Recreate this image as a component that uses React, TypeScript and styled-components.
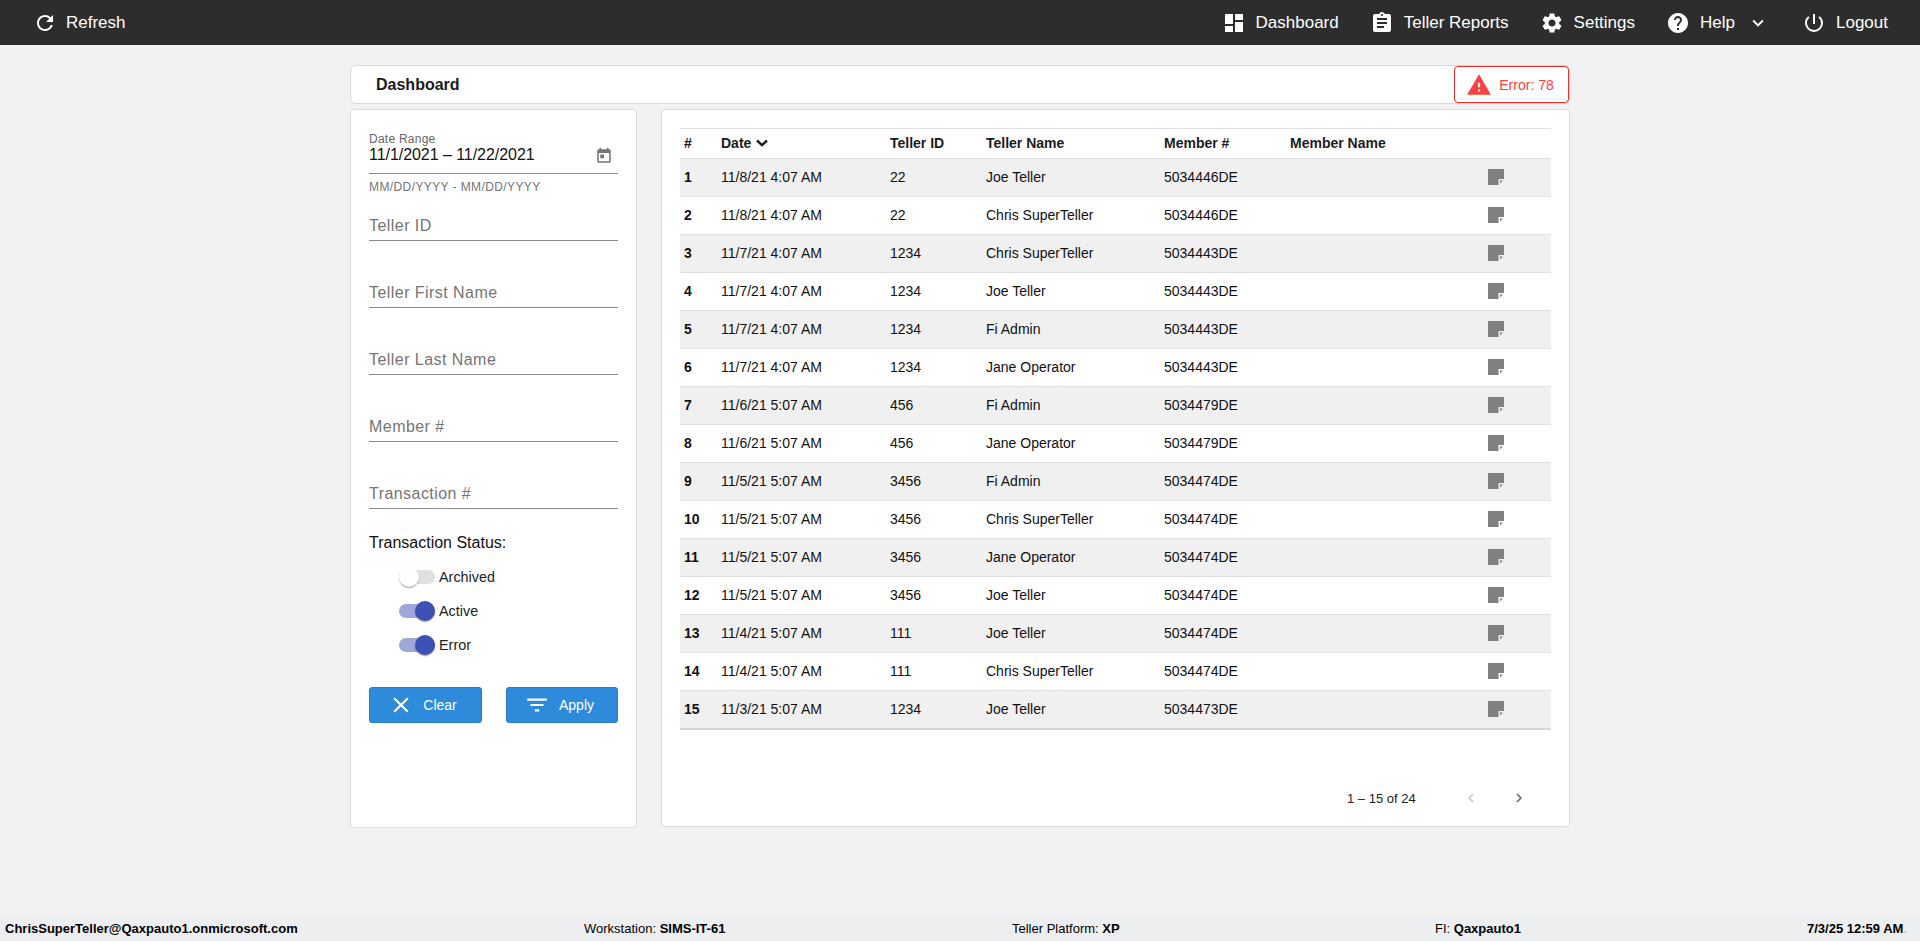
import React from 'react'
import styled, { createGlobalStyle } from 'styled-components'
import {
  MdRefresh,
  MdDashboard,
  MdAssignment,
  MdSettings,
  MdHelp,
  MdExpandMore,
  MdPowerSettingsNew,
  MdWarning,
  MdClose,
  MdFilterList,
  MdChevronLeft,
  MdChevronRight,
} from 'react-icons/md'

const rows = [
  ['11/8/21 4:07 AM', '22', 'Joe Teller', '5034446DE'],
  ['11/8/21 4:07 AM', '22', 'Chris SuperTeller', '5034446DE'],
  ['11/7/21 4:07 AM', '1234', 'Chris SuperTeller', '5034443DE'],
  ['11/7/21 4:07 AM', '1234', 'Joe Teller', '5034443DE'],
  ['11/7/21 4:07 AM', '1234', 'Fi Admin', '5034443DE'],
  ['11/7/21 4:07 AM', '1234', 'Jane Operator', '5034443DE'],
  ['11/6/21 5:07 AM', '456', 'Fi Admin', '5034479DE'],
  ['11/6/21 5:07 AM', '456', 'Jane Operator', '5034479DE'],
  ['11/5/21 5:07 AM', '3456', 'Fi Admin', '5034474DE'],
  ['11/5/21 5:07 AM', '3456', 'Chris SuperTeller', '5034474DE'],
  ['11/5/21 5:07 AM', '3456', 'Jane Operator', '5034474DE'],
  ['11/5/21 5:07 AM', '3456', 'Joe Teller', '5034474DE'],
  ['11/4/21 5:07 AM', '111', 'Joe Teller', '5034474DE'],
  ['11/4/21 5:07 AM', '111', 'Chris SuperTeller', '5034474DE'],
  ['11/3/21 5:07 AM', '1234', 'Joe Teller', '5034473DE'],
]

const filters = ['Teller ID', 'Teller First Name', 'Teller Last Name', 'Member #', 'Transaction #']

const statuses = [
  { label: 'Archived', on: false },
  { label: 'Active', on: true },
  { label: 'Error', on: true },
]

const NoteIcon = () => (
  <svg width="16" height="16" viewBox="0 0 16 16">
    <path d="M0 0h16v10h-5.5v6H0z" fill="#808080" />
    <path d="M12 11.5h3L12 14.5z" fill="#808080" />
  </svg>
)

const App: React.FC = () => {
  return (
    <Page>
      <GlobalStyle />
      <TopBar>
        <RefreshItem>
          <MdRefresh size={24} />
          Refresh
        </RefreshItem>
        <NavGroup>
          <NavItem>
            <MdDashboard size={24} />
            Dashboard
          </NavItem>
          <NavItem>
            <MdAssignment size={24} />
            Teller Reports
          </NavItem>
          <NavItem>
            <MdSettings size={24} />
            Settings
          </NavItem>
          <NavItem>
            <MdHelp size={24} />
            Help
            <Caret>
              <MdExpandMore size={22} />
            </Caret>
          </NavItem>
          <NavItem>
            <MdPowerSettingsNew size={24} />
            Logout
          </NavItem>
        </NavGroup>
      </TopBar>

      <Main>
        <TitleBar>
          <Title>Dashboard</Title>
          <ErrorBadge>
            <MdWarning size={26} />
            Error: 78
          </ErrorBadge>
        </TitleBar>

        <Panels>
          <FilterPanel>
            <DateField>
              <DateLabel>Date Range</DateLabel>
              <DateValue>
                <DateInput readOnly value="11/1/2021 – 11/22/2021" />
                <CalendarGlyph viewBox="0 0 24 24">
                  <path d="M19 3h-1V1h-2v2H8V1H6v2H5c-1.11 0-1.99.9-1.99 2L3 19c0 1.1.89 2 2 2h14c1.1 0 2-.9 2-2V5c0-1.1-.9-2-2-2zm0 16H5V8h14v11zM7 10h5v5H7z" />
                </CalendarGlyph>
              </DateValue>
              <DateHint>MM/DD/YYYY - MM/DD/YYYY</DateHint>
            </DateField>

            {filters.map((name) => (
              <TextField key={name} placeholder={name} />
            ))}

            <StatusTitle>Transaction Status:</StatusTitle>
            <StatusList>
              {statuses.map((status) => (
                <StatusRow key={status.label}>
                  <Track $on={status.on}>
                    <Thumb $on={status.on} />
                  </Track>
                  {status.label}
                </StatusRow>
              ))}
            </StatusList>

            <Actions>
              <ActionButton>
                <MdClose size={26} />
                Clear
              </ActionButton>
              <ActionButton>
                <MdFilterList size={26} />
                Apply
              </ActionButton>
            </Actions>
          </FilterPanel>

          <TablePanel>
            <HeadRow>
              <span>#</span>
              <SortCell>
                Date
                <SortMark viewBox="0 0 12 8">
                  <path d="M1 1.5l5 4.6 5-4.6" />
                </SortMark>
              </SortCell>
              <span>Teller ID</span>
              <span>Teller Name</span>
              <span>Member #</span>
              <span>Member Name</span>
            </HeadRow>
            {rows.map((row, index) => (
              <BodyRow key={index} $shaded={index % 2 === 0}>
                <b>{index + 1}</b>
                <span>{row[0]}</span>
                <span>{row[1]}</span>
                <span>{row[2]}</span>
                <span>{row[3]}</span>
                <span />
                <NoteCell>
                  <NoteIcon />
                </NoteCell>
              </BodyRow>
            ))}
            <Pager>
              <PagerText>1 – 15 of 24</PagerText>
              <PagerButton $disabled>
                <MdChevronLeft size={18} />
              </PagerButton>
              <PagerButton>
                <MdChevronRight size={18} />
              </PagerButton>
            </Pager>
          </TablePanel>
        </Panels>
      </Main>

      <Footer>
        <b>ChrisSuperTeller@Qaxpauto1.onmicrosoft.com</b>
        <span>
          Workstation: <b>SIMS-IT-61</b>
        </span>
        <span>
          Teller Platform: <b>XP</b>
        </span>
        <span>
          FI: <b>Qaxpauto1</b>
        </span>
        <span>
          <b>7/3/25 12:59 AM</b>
          <FaintDot>.</FaintDot>
        </span>
      </Footer>
    </Page>
  )
}

const GlobalStyle = createGlobalStyle`
  body {
    margin: 0;
    background: #f2f2f2;
    font-family: "Liberation Sans", Arial, sans-serif;
    color: #111;
  }
`

const Page = styled.div`
  min-height: 100vh;
  display: flex;
  flex-direction: column;
`

const TopBar = styled.header`
  height: 45px;
  background: #2d2d2d;
  color: #fff;
  display: flex;
  align-items: center;
  justify-content: space-between;
  padding: 0 32px 0 33px;
  font-size: 17px;
`

const NavGroup = styled.nav`
  display: flex;
  gap: 31px;
`

const NavItem = styled.div`
  display: flex;
  align-items: center;
  gap: 10px;
`

const RefreshItem = styled(NavItem)`
  gap: 9px;
`

const Caret = styled.span`
  display: flex;
  margin-left: 2px;
  padding-right: 2px;
`

const Main = styled.main`
  width: 1220px;
  margin: 20px auto 0;
`

const TitleBar = styled.div`
  height: 39px;
  box-sizing: border-box;
  background: #fff;
  border: 1px solid #d9d9d9;
  border-radius: 6px;
  display: flex;
  align-items: center;
  justify-content: space-between;
  padding-left: 25px;
`

const Title = styled.h1`
  margin: 0;
  font-size: 16px;
  font-weight: 700;
  color: #1c1c1c;
`

const ErrorBadge = styled.div`
  width: 115px;
  height: 37px;
  box-sizing: border-box;
  background: #fff;
  border: 1.5px solid #f02c2c;
  border-radius: 4px;
  color: #ff4040;
  font-size: 14px;
  display: flex;
  align-items: center;
  justify-content: center;
  gap: 7px;
  padding-right: 3px;
`

const Panels = styled.div`
  display: flex;
  gap: 24px;
  margin-top: 5px;
`

const panel = `
  background: #fff;
  border: 1px solid #dcdcdc;
  border-radius: 4px;
  box-sizing: border-box;
  height: 718px;
`

const FilterPanel = styled.aside`
  ${panel}
  flex: 0 0 287px;
  height: 719px;
  padding: 22px 18px 0;
  display: flex;
  flex-direction: column;
`

const DateField = styled.div`
  display: flex;
  flex-direction: column;
`

const DateLabel = styled.label`
  font-size: 12px;
  letter-spacing: 0.25px;
  line-height: 14px;
  color: #666;
`

const DateValue = styled.div`
  display: flex;
  align-items: flex-start;
  justify-content: space-between;
  height: 27px;
  padding-right: 5px;
  border-bottom: 1px solid #8c8c8c;
`

const DateInput = styled.input`
  border: 0;
  outline: 0;
  padding: 0 0 9px;
  width: 200px;
  font: 16px "Liberation Sans", Arial, sans-serif;
  letter-spacing: -0.05px;
  color: #111;
`

const CalendarGlyph = styled.svg`
  width: 18px;
  height: 18px;
  margin-top: 1px;
  fill: #757575;
`

const DateHint = styled.div`
  margin-top: 6px;
  font-size: 12px;
  letter-spacing: 0.4px;
  color: #757575;
`

const TextField = styled.input`
  display: block;
  box-sizing: border-box;
  width: 100%;
  height: 33px;
  margin-top: 34px;
  padding: 4px 0 0;
  border: 0;
  border-bottom: 1px solid #8c8c8c;
  outline: 0;
  font: 16px "Liberation Sans", Arial, sans-serif;
  letter-spacing: 0.45px;
  color: #111;

  &:first-of-type {
    margin-top: 14px;
  }

  &::placeholder {
    color: #757575;
    opacity: 1;
  }
`

const StatusTitle = styled.div`
  margin-top: 25px;
  font-size: 16px;
  line-height: 18px;
  color: #111;
`

const StatusList = styled.div`
  margin: 15px 0 0 30px;
  display: flex;
  flex-direction: column;
  gap: 14px;
`

const StatusRow = styled.div`
  height: 20px;
  display: flex;
  align-items: center;
  gap: 4px;
  font-size: 14.4px;
  color: #222;
`

const Track = styled.div<{ $on: boolean }>`
  position: relative;
  width: 36px;
  height: 14px;
  border-radius: 7px;
  background: ${(p) => (p.$on ? '#9fa8da' : '#e0e0e0')};
`

const Thumb = styled.div<{ $on: boolean }>`
  position: absolute;
  top: -3px;
  left: ${(p) => (p.$on ? '16px' : '0')};
  width: 20px;
  height: 20px;
  border-radius: 50%;
  background: ${(p) => (p.$on ? '#3f51b5' : '#fff')};
  box-shadow: 0 2px 1px -1px rgba(0, 0, 0, 0.2), 0 1px 1px rgba(0, 0, 0, 0.14), 0 1px 3px rgba(0, 0, 0, 0.12);
`

const Actions = styled.div`
  margin-top: 32px;
  display: grid;
  grid-template-columns: 113px 112px;
  justify-content: space-between;
`

const ActionButton = styled.button`
  height: 36px;
  box-sizing: border-box;
  background: #2e8bdb;
  border: 1px solid #2a7cc4;
  border-radius: 3px;
  color: #fff;
  font: 14px "Liberation Sans", Arial, sans-serif;
  display: flex;
  align-items: center;
  justify-content: center;
  gap: 9px;
  padding: 0 6px 0 0;
`

const TablePanel = styled.section`
  ${panel}
  flex: 1;
  min-width: 0;
  padding: 18px 18px 0;
`

const columns = '41px 169px 96px 178px 126px 198px 1fr'

const HeadRow = styled.div`
  height: 31px;
  box-sizing: border-box;
  display: grid;
  grid-template-columns: ${columns};
  align-items: center;
  padding: 0 0 2px;
  border-top: 1px solid #dfe0e6;
  border-bottom: 1px solid #dfe0e6;
  font-size: 14px;
  font-weight: 700;
  color: #1c1c1c;

  & > span:first-child {
    padding-left: 4px;
  }
`

const SortCell = styled.span`
  display: flex;
  align-items: center;
  gap: 5px;
`

const SortMark = styled.svg`
  width: 12px;
  height: 8px;
  fill: none;
  stroke: #1c1c1c;
  stroke-width: 2.4;
`

const BodyRow = styled.div<{ $shaded: boolean }>`
  height: 38px;
  box-sizing: border-box;
  display: grid;
  grid-template-columns: ${columns};
  align-items: center;
  padding-bottom: 2px;
  background: ${(p) => (p.$shaded ? '#f0f0f0' : '#fff')};
  border-bottom: 1px solid #dfe0e6;
  font-size: 14px;
  color: #111;

  & > b:first-child {
    padding-left: 4px;
  }

  &:nth-last-child(2) {
    height: 39px;
    border-bottom: 2px solid #d5d6dc;
  }
`

const NoteCell = styled.span`
  display: flex;
`

const Pager = styled.div`
  margin-top: 59px;
  display: flex;
  align-items: center;
  gap: 30px;
`

const PagerText = styled.span`
  margin-left: 667px;
  width: 85px;
  font-size: 13px;
  color: #222;
`

const PagerButton = styled.span<{ $disabled?: boolean }>`
  display: flex;
  color: ${(p) => (p.$disabled ? '#c6c6c6' : '#666')};
`

const Footer = styled.footer`
  margin-top: auto;
  height: 26px;
  background: #edeef0;
  display: grid;
  grid-template-columns: 579px 428px 423px 372px 1fr;
  align-items: center;
  padding-left: 5px;
  font-size: 13px;
  color: #000;
`

const FaintDot = styled.span`
  color: #a0a4a8;
`

export default App
